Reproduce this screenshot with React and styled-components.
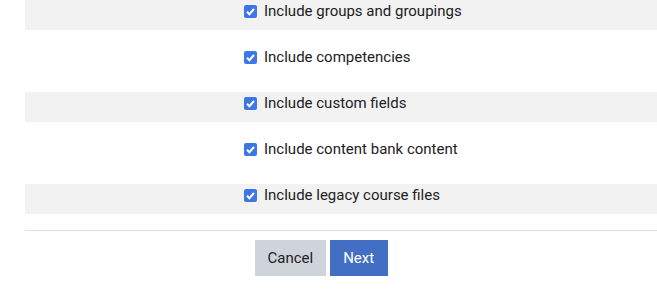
import React from 'react';
import styled, {createGlobalStyle} from 'styled-components';

const GlobalStyle = createGlobalStyle`
body {
  margin: 0;
  background: #fff;
  font-family: Roboto, "Liberation Sans", sans-serif;
  color: #1d2125;
}
`;

const Page = styled.div`
padding-left: 25px;
width: 632px;
`;

const Row = styled.div`
display: flex;
height: 30px;
margin-bottom: 16px;
padding-left: 219px;
align-items: flex-start;
background: ${props => props.shaded ? '#f2f2f2' : 'transparent'};
`;

const Label = styled.label`
display: flex;
align-items: center;
gap: 7px;
font-size: 15px;
line-height: 22px;
`;

const Box = styled.span`
display: flex;
width: 13px;
height: 13px;
border-radius: 2px;
background: #3d77e6;
align-items: center;
justify-content: center;
`;

const Divider = styled.div`
height: 1px;
background: #dee2e6;
`;

const Buttons = styled.div`
display: flex;
gap: 4px;
padding: 9px 0 0 230px;
`;

const Button = styled.button`
height: 36px;
padding: 0 ${props => props.primary ? '13.5px' : '12.5px'};
border: none;
border-radius: 0;
font-family: Roboto, "Liberation Sans", sans-serif;
font-size: 15px;
background: ${props => props.primary ? '#426fc3' : '#ced4da'};
color: ${props => props.primary ? '#fff' : '#1d2125'};
`;

const items = [
  'Include groups and groupings',
  'Include competencies',
  'Include custom fields',
  'Include content bank content',
  'Include legacy course files'
];

const Check = () => (
  <Box>
    <svg width="11" height="11" viewBox="0 0 11 11">
      <path d="M2 5.8 L4.4 8.2 L9 3" stroke="#fff" strokeWidth="2" fill="none" />
    </svg>
  </Box>
);

export default function App() {
  return (
    <Page>
      <GlobalStyle />
      {items.map((text, i) => (
        <Row key={text} shaded={i % 2 === 0}>
          <Label><Check />{text}</Label>
        </Row>
      ))}
      <Divider />
      <Buttons>
        <Button>Cancel</Button>
        <Button primary>Next</Button>
      </Buttons>
    </Page>
  );
}
